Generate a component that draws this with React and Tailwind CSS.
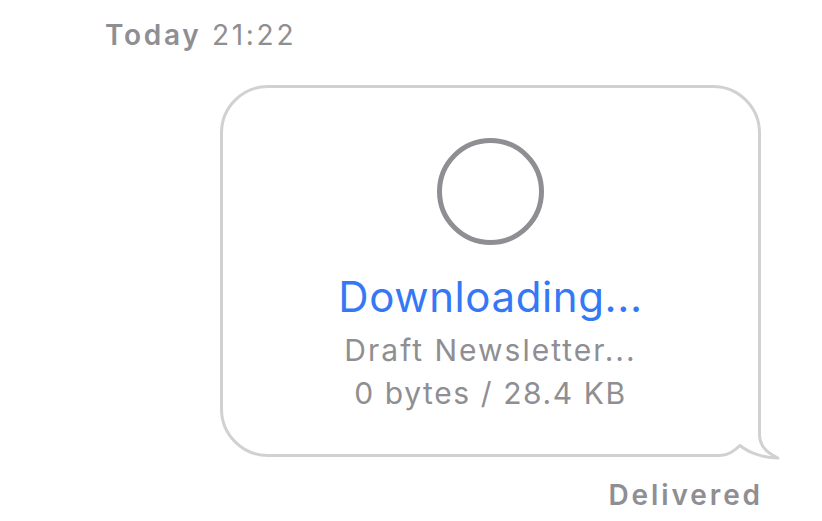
const font = { fontFamily: "Inter, 'Liberation Sans', sans-serif" };

const Tail = () => (
  <svg
    className="absolute left-[497px] top-[337px]"
    width="70"
    height="40"
    viewBox="0 0 70 40"
    fill="none"
  >
    <rect x="0" y="0" width="70" height="40" fill="#ffffff" />
    <path
      d="M0 30.5 C9 30.5 15 25 20 20.5 C28 27 42 33 58 33 C47 28 39.5 21 39.5 10 L39.5 0"
      stroke="#d1d1d1"
      strokeWidth="3"
      strokeLinejoin="round"
      fill="none"
    />
  </svg>
);

export default function App() {
  return (
    <div className="w-[822px] h-[521px] bg-white overflow-hidden" style={font}>
      <div className="pl-[105px] pt-[17px] text-[28px] leading-[36px] tracking-[2.7px] text-[#8e8e93]">
        <span className="font-semibold">Today</span> 21:22
      </div>

      <div className="flex flex-col items-end pr-[61px] mt-[32px]">
        <div className="relative w-[541px] h-[372px] rounded-[48px] rounded-br-none border-[3px] border-[#d1d1d1] flex flex-col items-center">
          <div className="mt-[50px] w-[107px] h-[107px] rounded-full border-[5px] border-[#8e8e93]" />
          <div className="mt-[26px] text-[42px] leading-[52px] tracking-[0.6px] text-[#3478f6]">
            Downloading...
          </div>
          <div className="mt-[7px] text-[30px] leading-[40px] tracking-[2px] text-[#8e8e93]">
            Draft Newsletter...
          </div>
          <div className="mt-[3px] text-[30px] leading-[40px] tracking-[1.6px] text-[#8e8e93]">
            0 bytes / 28.4 KB
          </div>
          <Tail />
        </div>

        <div className="mt-[20px] mr-[-2px] text-[28px] leading-[36px] font-semibold tracking-[2.9px] text-[#8e8e93]">
          Delivered
        </div>
      </div>
    </div>
  );
}
